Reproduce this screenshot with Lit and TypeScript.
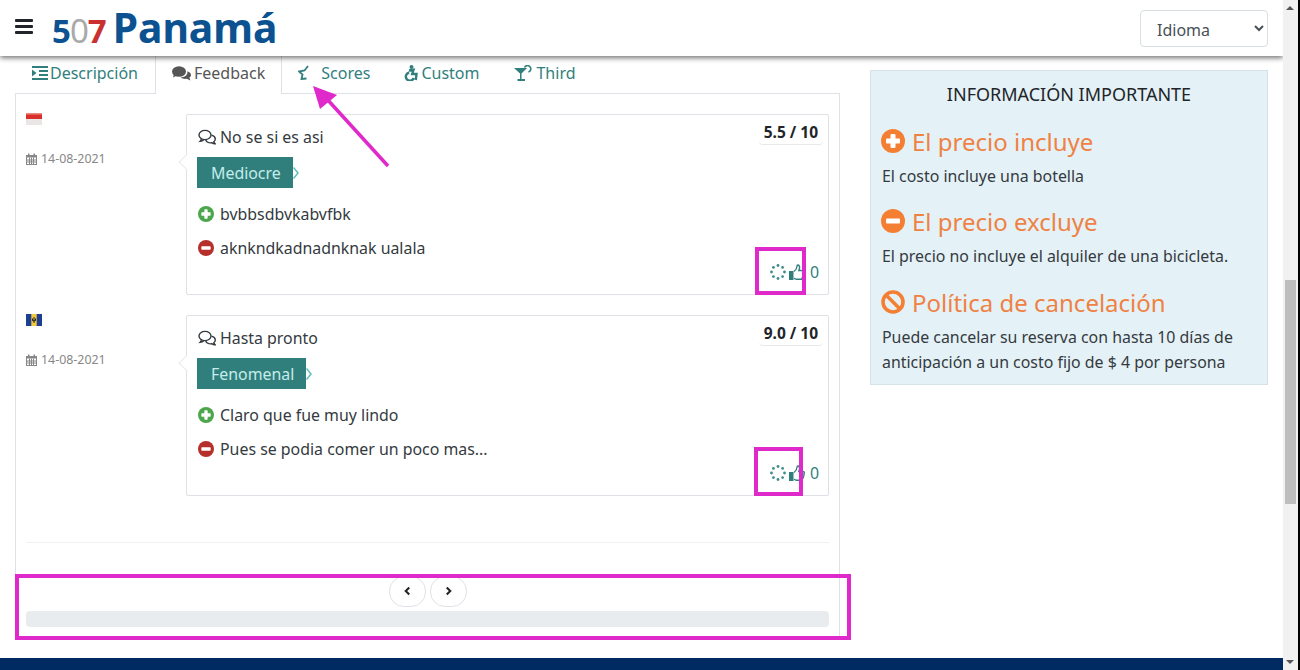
import { LitElement, html, css, svg } from "lit";
import { customElement } from "lit/decorators.js";

const plusIcon = svg`<circle cx="12" cy="12" r="12" fill="currentColor"/><rect x="5" y="9.5" width="14" height="5" rx="1" fill="#fff"/><rect x="9.5" y="5" width="5" height="14" rx="1" fill="#fff"/>`;
const minusIcon = svg`<circle cx="12" cy="12" r="12" fill="currentColor"/><rect x="5" y="9.5" width="14" height="5" rx="1" fill="#fff"/>`;
const banIcon = svg`<circle cx="12" cy="12" r="10" fill="none" stroke="currentColor" stroke-width="3.6"/><path d="M5 5l14 14" stroke="currentColor" stroke-width="3.6"/>`;
const commentsO = svg`<g fill="none" stroke="currentColor" stroke-width="1.4"><ellipse cx="7" cy="6" rx="6" ry="4.6"/><path d="M3.5 9.5C3.3 11 2.6 11.8 2 12.4 3.8 12.3 5 11.6 6 10.6"/><path d="M13.6 6.2C16 7 17.3 8.4 17.3 10 17.3 11 16.7 12 15.8 12.7 16 13.6 16.5 14.3 17.2 14.8 15.6 14.7 14.4 14.2 13.6 13.6 11.4 14.2 8.6 13.4 7.7 11"/></g>`;

interface Review {
  flag: "red" | "bb";
  date: string;
  title: string;
  score: string;
  label: string;
  good: string;
  bad: string;
}

const reviews: Review[] = [
  { flag: "red", date: "14-08-2021", title: "No se si es asi", score: "5.5 / 10", label: "Mediocre", good: "bvbbsdbvkabvfbk", bad: "aknkndkadnadnknak ualala" },
  { flag: "bb", date: "14-08-2021", title: "Hasta pronto", score: "9.0 / 10", label: "Fenomenal", good: "Claro que fue muy lindo", bad: "Pues se podia comer un poco mas..." },
];

@customElement("app-root")
export class AppRoot extends LitElement {
  static styles = css`
    :host { display: block; width: 1300px; height: 670px; overflow: hidden; position: relative; background: #fff;
      font-family: "Noto Sans", "Open Sans", sans-serif; color: #343a40; font-size: 16px; }
    * { box-sizing: border-box; }
    .frame { display: flex; height: 670px; }
    .page { width: 1283px; height: 670px; overflow: hidden; display: flex; flex-direction: column; flex: none; }
    .header { height: 56px; flex: none; display: flex; align-items: center; padding: 0 15px; position: relative; z-index: 2;
      background: #fff; box-shadow: 0 2px 5px rgba(0,0,0,.55); }
    .burger { width: 18px; height: 15px; flex: none; margin-right: 19px; margin-top: -3px; display: flex; flex-direction: column; justify-content: space-between; }
    .burger i { display: block; height: 3px; background: #212529; border-radius: 1px; }
    .logo { display: flex; align-items: baseline; font-weight: 700; color: #0c5190; margin-top: -2px; line-height: 1; white-space: nowrap; }
    .logo .num { font-size: 33px; letter-spacing: -1px; margin-right: 7px; }
    .logo .z { color: #a9a9a9; font-weight: 400; }
    .logo .r { color: #c9302f; }
    .logo .name { font-size: 40.75px; }
    .idioma { margin-left: auto; margin-top: 1px; width: 128px; height: 37px; border: 1px solid #dadfe3; border-radius: 4px;
      background: #fff; color: #495057; font: 16px "Noto Sans", sans-serif; padding: 2px 12px 0; }
    .main { display: flex; flex: none; padding: 0 15px; gap: 30px; }
    .left { width: 825px; flex: none; }
    .tabs { display: flex; height: 38px; padding-left: 1px; }
    .tab { display: flex; align-items: center; padding: 0 16px 4px 15px; font-size: 16px; color: #317f7d; white-space: nowrap; border: 1px solid transparent; border-top: 0; }
    .tab svg { flex: none; margin-right: 3px; }
    .tab.on { color: #555; background: #fff; border-color: #dee2e6; border-bottom: 0; position: relative; height: 38px; margin-bottom: -1px; z-index: 1; padding-left: 16px; }
    .tab.desc svg { margin-right: 2px; }
    .tab.scores { padding-right: 17px; }
    .tab.scores svg { margin-right: 11px; }
    .tab.custom { padding-right: 18px; }
    .tab.custom svg { margin-right: 2px; }
    .panel { border: 1px solid #dee2e6; height: 545px; padding: 20px 10px 0; margin-top: -1px; }
    .row { display: grid; grid-template-columns: 160px 1fr; height: 181px; margin-bottom: 20px; }
    .meta { display: flex; flex-direction: column; align-items: flex-start; }
    .flag { width: 16px; height: 12px; margin-top: -1px; display: block; }
    .date { display: flex; align-items: center; gap: 4px; margin-top: 25px; font-size: 12.4px; line-height: 18px; color: #888; }
    .card { position: relative; border: 1px solid #dee2e6; border-radius: 2px; padding: 10px; background: #fff; box-shadow: 0 0 1px rgba(0,0,0,.05); }
    .card::before { content: ""; position: absolute; left: -6px; top: 41px; width: 11px; height: 11px; background: #fff; border-left: 1px solid #e7eaed; border-bottom: 1px solid #e7eaed; transform: rotate(45deg); }
    .title { display: flex; align-items: center; gap: 4px; height: 24px; font-size: 15.9px; color: #343a40; margin-bottom: 1px; }
    .title svg { margin-left: 1px; }
    .score { position: absolute; top: 7px; right: 5px; height: 23px; padding: 0 5px; line-height: 21px; font-size: 15.5px; font-weight: 700; color: #212529; border-bottom: 1px solid #e6e8ea; border-radius: 4px; }
    .badgeline { display: flex; align-items: center; margin-top: 8px; height: 31px; }
    .badge { height: 31px; padding: 0 12px 0 14px; display: flex; align-items: center; background: #317f7d; color: #c5ecea; font-size: 15.9px; }
    .item { display: flex; align-items: center; gap: 6px; height: 24px; font-size: 15.9px; color: #343a40; padding-left: 1px; }
    .item.good { margin-top: 14px; }
    .item.bad { margin-top: 10px; }
    .item .g { color: #4ca64c; }
    .item .b { color: #b52f2b; }
    .like { display: flex; align-items: center; justify-content: flex-end; height: 24px; color: #317f7d; font-size: 15.9px; gap: 5px; margin-right: -1px; }
    .like .count { margin-left: -0.5px; }
    .like .thumb { margin-left: -2px; }
    .rule { height: 1px; background: #f0f1f2; margin-top: 46px; }
    .pager { display: flex; justify-content: center; gap: 4px; margin-top: 33px; height: 31px; }
    .pbtn { width: 37px; height: 31px; padding-bottom: 2px; border: 1px solid #dee2e6; border-radius: 15px; background: #fff; display: flex; align-items: center; justify-content: center; color: #212529; }
    .bar { height: 16px; margin-top: 4px; background: #e9ecef; border-radius: 4px; }
    .info { width: 398px; height: 315px; margin-top: 14px; flex: none; background: #e4f1f6; border: 1px solid #d5e3e8; padding: 0 10px; }
    .info h3 { margin: 0; padding-top: 11px; height: 46px; text-align: center; font-weight: 400; font-size: 18px; line-height: 24px; color: #212529; }
    .info h4 { display: flex; align-items: center; gap: 7px; margin: 0; height: 34px; font-weight: 400; font-size: 24px; color: #ef8243; }
    .info h4 svg { color: #f47f33; flex: none; }
    .info h4.sec1 { margin-top: 7px; }
    .info h4.sec2 { margin-top: 15px; }
    .info h4.sec3 { margin-top: 16px; }
    .info p { margin: 6px 0 0 1px; font-size: 15.9px; line-height: 25px; color: #343a40; }
    .footer { height: 12px; margin-top: 20px; background: #002b62; flex: none; }
    .sb { width: 15px; flex: none; height: 670px; background: #f1f1f1; position: relative; }
    .sb .thumb { position: absolute; left: 2px; width: 11px; top: 280px; height: 224px; background: #bebebe; }
    .sb .up, .sb .dn { position: absolute; left: 3px; width: 0; height: 0; border-left: 4px solid transparent; border-right: 4px solid transparent; }
    .sb .up { top: 6px; border-bottom: 4px solid #555; }
    .sb .dn { top: 660px; border-top: 4px solid #555; }
    .edge { width: 2px; flex: none; background: #000; }
    .box { position: absolute; border: 4px solid #e029cb; pointer-events: none; z-index: 5; }
    .b1 { left: 755px; top: 247px; width: 51px; height: 48px; }
    .b2 { left: 754px; top: 447px; width: 49px; height: 49px; }
    .b3 { left: 15px; top: 574px; width: 836px; height: 66px; }
    .arrow { position: absolute; left: 0; top: 0; z-index: 5; pointer-events: none; }
  `;

  private flag(k: string) {
    if (k === "red")
      return html`<svg class="flag" viewBox="0 0 16 12"><rect width="16" height="6" fill="#d8312c"/><rect y="6" width="16" height="6" fill="#ebe6e6"/><rect width="16" height="1.5" fill="#ee8a84"/></svg>`;
    return html`<svg class="flag" viewBox="0 0 16 12"><rect width="16" height="12" fill="#1c3f94"/><rect x="5.3" width="5.4" height="12" fill="#f5c93c"/><path d="M8 3v6M6.5 4.5v2.2h3V4.5" stroke="#222" fill="none"/></svg>`;
  }

  private spinner() {
    const dots = Array.from({ length: 8 }, (_, i) => {
      const a = (i * Math.PI) / 4;
      return svg`<circle cx=${8 + 6.5 * Math.cos(a)} cy=${8 + 6.5 * Math.sin(a)} r="1.4" fill="#3f8d8b"/>`;
    });
    return html`<svg width="16" height="16" viewBox="0 0 16 16">${dots}</svg>`;
  }

  private review(r: Review) {
    return html`<div class="row">
      <div class="meta">
        ${this.flag(r.flag)}
        <div class="date">
          <svg width="11" height="12" viewBox="0 0 11 12"><path fill="#888" d="M0 2h2V0.5h1.5V2h4V0.5H9V2h2v10H0zM1 4.5v6.5h9V4.5z"/><path stroke="#888" stroke-width="1" d="M1 7h9M1 9h9M3.5 4.5v6.5M5.5 4.5v6.5M7.5 4.5v6.5"/></svg>
          ${r.date}
        </div>
      </div>
      <div class="card">
        <div class="title"><svg width="18" height="16" viewBox="0 0 18 16">${commentsO}</svg>${r.title}</div>
        <div class="score">${r.score}</div>
        <div class="badgeline">
          <div class="badge">${r.label}</div>
          <svg width="6" height="14" viewBox="0 0 6 14"><path d="M.5 1.5L5 7 .5 12.5" fill="#fff" stroke="#5fbdb8" stroke-width="1.5"/></svg>
        </div>
        <div class="item good"><svg class="g" width="16" height="16" viewBox="0 0 24 24">${plusIcon}</svg>${r.good}</div>
        <div class="item bad"><svg class="b" width="16" height="16" viewBox="0 0 24 24">${minusIcon}</svg>${r.bad}</div>
        <div class="like">
          ${this.spinner()}
          <svg class="thumb" width="16" height="16" viewBox="0 0 16 16"><rect x="0" y="7" width="4.5" height="9" fill="#317f7d"/><path d="M5 7.5C7 6 8 4 8.3 1.2 10 .6 11 2.2 10.4 4.5L9.8 6.5H14.2C15.6 6.6 15.6 8.4 14.8 9 15.4 10 15 11 14.3 11.4 14.6 12.6 14 13.4 13.2 13.7 13.3 14.8 12.6 15.3 11.8 15.3H7.5L5 14.4" fill="none" stroke="#317f7d" stroke-width="1.4"/></svg>
          <span class="count">0</span>
        </div>
      </div>
    </div>`;
  }

  render() {
    return html`<div class="frame">
      <div class="page">
        <div class="header">
          <div class="burger"><i></i><i></i><i></i></div>
          <div class="logo"><span class="num">5<span class="z">0</span><span class="r">7</span></span><span class="name">Panamá</span></div>
          <select class="idioma"><option>Idioma</option></select>
        </div>
        <div class="main">
          <div class="left">
            <div class="tabs">
              <div class="tab desc">
                <svg width="16" height="14" viewBox="0 0 16 14"><path fill="#317f7d" d="M0 0h16v2H0zM7 4h9v2H7zM7 8h9v2H7zM0 12h16v2H0zM0 3.5L4.500 7 0 10.500z"/></svg>
                Descripción</div>
              <div class="tab on">
                <svg width="19" height="15" viewBox="0 0 19 15"><ellipse cx="7" cy="5.500" rx="7" ry="5.300" fill="#555"/><path d="M2 8L1 11.500 6 9z" fill="#555"/><path d="M15.400 5.300C17.600 6 19 7.400 19 9 19 10 18.400 11 17.400 11.700L18.500 14.500 14.700 12.800C12.500 13.200 10 12.700 8.500 11.500 12 11.600 16 9.500 15.400 5.300z" fill="#555"/></svg>
                Feedback</div>
              <div class="tab scores">
                <svg width="12" height="15" viewBox="0 0 12 15"><path d="M10 1L6.500 5.500 1 6.500 4.500 9.500 3.500 14 8.500 13.500" fill="none" stroke="#317f7d" stroke-width="1.800"/></svg>
                Scores</div>
              <div class="tab custom">
                <svg width="15" height="16" viewBox="0 0 15 16"><circle cx="7.500" cy="2" r="2" fill="#317f7d"/><path d="M5 5.500L9.500 4.800 8.200 9H12.500L11.800 15M5.200 7.500A4.100 4.100 0 1 0 9.800 13" fill="none" stroke="#317f7d" stroke-width="2.400"/></svg>
                Custom</div>
              <div class="tab third">
                <svg width="19" height="16" viewBox="0 0 19 16"><path d="M0 3h13L7.500 8.500V14h3.500v2H3.500v-2H6V8.500z" fill="#317f7d"/><path d="M10.500 2.500A3.300 3.300 0 1 1 14.500 7" fill="none" stroke="#317f7d" stroke-width="1.600"/></svg>
                Third</div>
            </div>
            <div class="panel">
              ${reviews.map((r) => this.review(r))}
              <div class="rule"></div>
              <div class="pager">
                <div class="pbtn"><svg width="7" height="10" viewBox="0 0 8 10"><path d="M6 1L2 5l4 4" fill="none" stroke="currentColor" stroke-width="2.400"/></svg></div>
                <div class="pbtn"><svg width="7" height="10" viewBox="0 0 8 10"><path d="M2 1l4 4-4 4" fill="none" stroke="currentColor" stroke-width="2.400"/></svg></div>
              </div>
              <div class="bar"></div>
            </div>
          </div>
          <div class="info">
            <h3>INFORMACIÓN IMPORTANTE</h3>
            <h4 class="sec1"><svg width="24" height="24" viewBox="0 0 24 24">${plusIcon}</svg>El precio incluye</h4>
            <p>El costo incluye una botella</p>
            <h4 class="sec2"><svg width="24" height="24" viewBox="0 0 24 24">${minusIcon}</svg>El precio excluye</h4>
            <p>El precio no incluye el alquiler de una bicicleta.</p>
            <h4 class="sec3"><svg width="24" height="24" viewBox="0 0 24 24">${banIcon}</svg>Política de cancelación</h4>
            <p>Puede cancelar su reserva con hasta 10 días de anticipación a un costo fijo de $ 4 por persona</p>
          </div>
        </div>
        <div class="footer"></div>
      </div>
      <div class="sb"><div class="up"></div><div class="thumb"></div><div class="dn"></div></div>
      <div class="edge"></div>
    </div>
    <div class="box b1"></div>
    <div class="box b2"></div>
    <div class="box b3"></div>
    <svg class="arrow" width="1300" height="670" viewBox="0 0 1300 670">
      <path d="M388 166L326 98" stroke="#e029cb" stroke-width="3.500" fill="none"/>
      <path d="M313 86L337 95 320 109z" fill="#e029cb"/>
    </svg>`;
  }
}
